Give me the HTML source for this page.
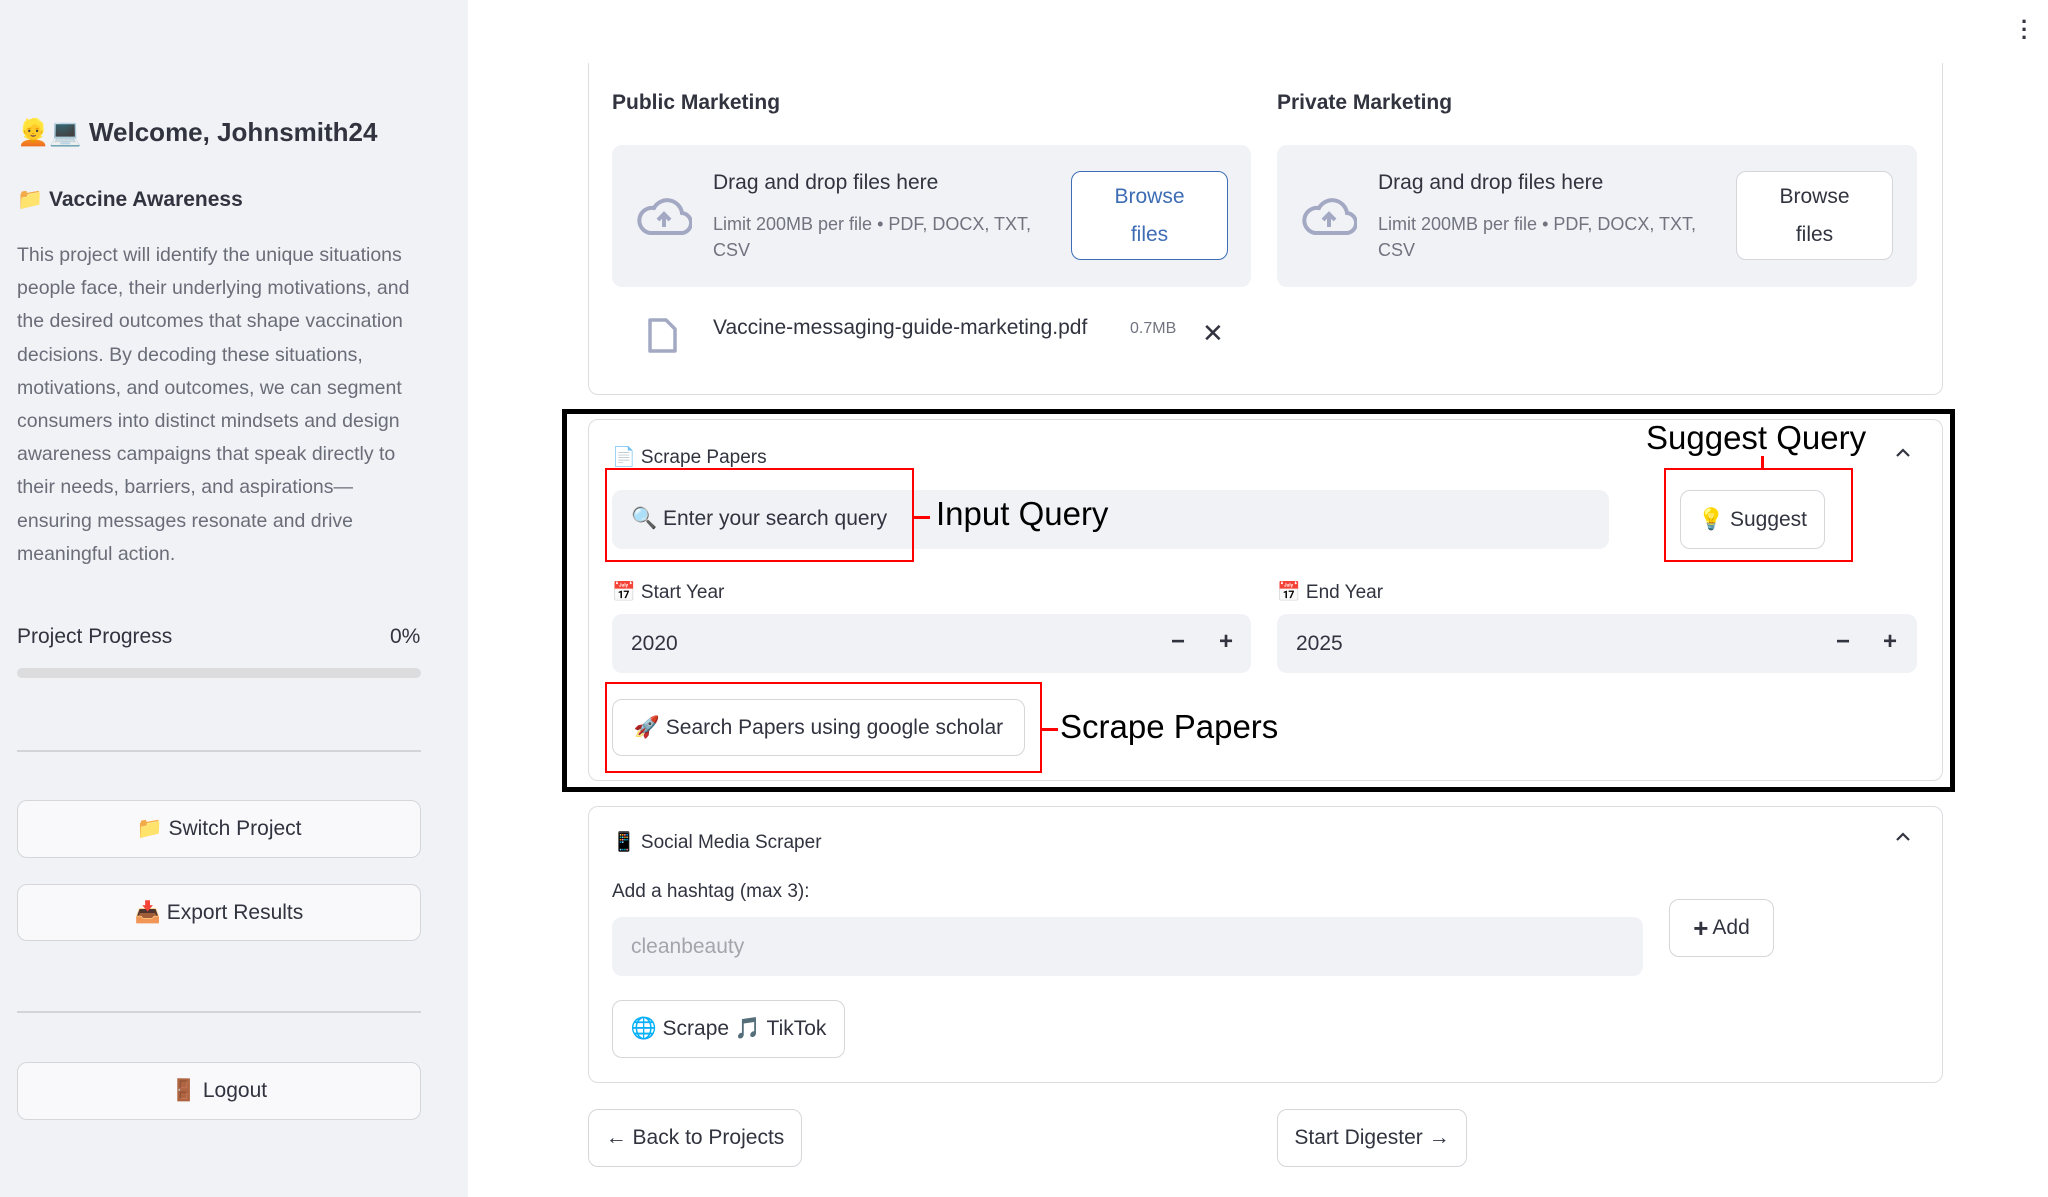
<!DOCTYPE html>
<html><head><meta charset="utf-8"><style>
*{box-sizing:border-box;margin:0;padding:0}
body{width:2048px;height:1197px;position:relative;overflow:hidden;background:#fff;font-family:"Liberation Sans","Noto Sans CJK JP",sans-serif;color:#31333f}
.a{position:absolute;white-space:nowrap}
.sb{position:absolute;left:0;top:0;width:468px;height:1197px;background:#f0f2f6}
.btn{position:absolute;border:1px solid #d5d6da;border-radius:10px;background:#fff;display:flex;align-items:center;justify-content:center;font-size:21px;color:#31333f}
.sbtn{background:#f9f9fb}
.inp{position:absolute;background:#f0f2f6;border-radius:10px}
.card{position:absolute;border:1.5px solid #dcdde1;border-radius:10px}
.red{position:absolute;border:2.5px solid #f00}
.ann{position:absolute;font-family:"Liberation Sans",sans-serif;font-size:33px;color:#000;white-space:nowrap}
.lbl{font-size:19px}
.p{font-size:19.5px;color:#6a6d78;line-height:33.2px}
</style></head><body>
<div class="sb"></div>
<div class="a" style="left:17px;top:117px;font-size:26px;font-weight:bold">👱💻 Welcome, Johnsmith24</div>
<div class="a" style="left:17px;top:188px;font-size:21px;font-weight:bold">📁 Vaccine Awareness</div>
<div class="a p" style="left:17px;top:239px">This project will identify the unique situations<br>people face, their underlying motivations, and<br>the desired outcomes that shape vaccination<br>decisions. By decoding these situations,<br>motivations, and outcomes, we can segment<br>consumers into distinct mindsets and design<br>awareness campaigns that speak directly to<br>their needs, barriers, and aspirations—<br>ensuring messages resonate and drive<br>meaningful action.</div>
<div class="a" style="left:17px;top:625px;font-size:21px">Project Progress</div>
<div class="a" style="left:390px;top:625px;font-size:21px">0%</div>
<div class="a" style="left:17px;top:668px;width:404px;height:10px;border-radius:5px;background:#dcdcde"></div>
<div class="a" style="left:17px;top:750px;width:404px;height:2px;background:#d3d4d8"></div>
<div class="a" style="left:17px;top:1011px;width:404px;height:2px;background:#d3d4d8"></div>
<div class="btn sbtn" style="left:17px;top:800px;width:404px;height:58px">📁 Switch Project</div>
<div class="btn sbtn" style="left:17px;top:884px;width:404px;height:57px">📥 Export Results</div>
<div class="btn sbtn" style="left:17px;top:1062px;width:404px;height:58px">🚪 Logout</div>
<div class="a" style="left:2021px;top:18px;font-size:22px;font-weight:bold;line-height:8px">·<br>·<br>·</div>

<!-- top card -->
<div class="card" style="left:588px;top:63px;width:1355px;height:332px;border-top:none;border-radius:0 0 10px 10px"></div>
<div class="a" style="left:612px;top:91px;font-size:21px;font-weight:bold">Public Marketing</div>
<div class="a" style="left:1277px;top:91px;font-size:21px;font-weight:bold">Private Marketing</div>
<div class="inp" style="left:612px;top:145px;width:639px;height:142px"></div>
<div class="inp" style="left:1277px;top:145px;width:640px;height:142px"></div>
<svg class="a" style="left:636px;top:198px" width="56" height="38" viewBox="0 0 56 38"><path d="M14 35 H44 A10 10 0 0 0 46 15 A15 15 0 0 0 18 10 A12 12 0 0 0 14 35 Z" fill="none" stroke="#a3a8c3" stroke-width="4"/><path d="M28 29 V17 M22 22 L28 16 L34 22" stroke="#a3a8c3" stroke-width="4" fill="none"/></svg>
<svg class="a" style="left:1301px;top:198px" width="56" height="38" viewBox="0 0 56 38"><path d="M14 35 H44 A10 10 0 0 0 46 15 A15 15 0 0 0 18 10 A12 12 0 0 0 14 35 Z" fill="none" stroke="#a3a8c3" stroke-width="4"/><path d="M28 29 V17 M22 22 L28 16 L34 22" stroke="#a3a8c3" stroke-width="4" fill="none"/></svg>
<div class="a" style="left:713px;top:171px;font-size:21px">Drag and drop files here</div>
<div class="a" style="left:713px;top:211px;font-size:18px;color:#71747f;line-height:26px">Limit 200MB per file • PDF, DOCX, TXT,<br>CSV</div>
<div class="a" style="left:1378px;top:171px;font-size:21px">Drag and drop files here</div>
<div class="a" style="left:1378px;top:211px;font-size:18px;color:#71747f;line-height:26px">Limit 200MB per file • PDF, DOCX, TXT,<br>CSV</div>
<div class="btn" style="left:1071px;top:171px;width:157px;height:89px;border-color:#3e6db5;color:#3e6db5;line-height:38px;text-align:center">Browse<br>files</div>
<div class="btn" style="left:1736px;top:171px;width:157px;height:89px;line-height:38px;text-align:center">Browse<br>files</div>
<svg class="a" style="left:647px;top:317px" width="31" height="37" viewBox="0 0 31 37"><path d="M3 3 H19 L28 12 V34 H3 Z" fill="none" stroke="#a3a8c3" stroke-width="3.5" stroke-linejoin="round"/></svg>
<div class="a" style="left:713px;top:316px;font-size:21px">Vaccine-messaging-guide-marketing.pdf</div>
<div class="a" style="left:1130px;top:320px;font-size:16px;color:#71747f">0.7MB</div>
<div class="a" style="left:1202px;top:318px;font-size:26px">✕</div>

<!-- scrape card -->
<div class="a" style="left:562px;top:409px;width:1393px;height:383px;border:5px solid #000"></div>
<div class="card" style="left:588px;top:419px;width:1355px;height:362px"></div>
<div class="a lbl" style="left:612px;top:445px">📄 Scrape Papers</div>
<svg class="a" style="left:1895px;top:447px" width="16" height="11" viewBox="0 0 16 11"><path d="M2 9 L8 3 L14 9" fill="none" stroke="#31333f" stroke-width="2.2"/></svg>
<div class="inp" style="left:612px;top:490px;width:997px;height:59px"></div>
<div class="a" style="left:631px;top:507px;font-size:21px">🔍 Enter your search query</div>
<div class="red" style="left:605px;top:468px;width:309px;height:94px"></div>
<div class="a" style="left:914px;top:516px;width:16px;height:2.5px;background:#f00"></div>
<div class="ann" style="left:936px;top:495px">Input Query</div>
<div class="ann" style="left:1646px;top:419px">Suggest Query</div>
<div class="a" style="left:1761px;top:456px;width:2.5px;height:13px;background:#f00"></div>
<div class="red" style="left:1664px;top:468px;width:189px;height:94px"></div>
<div class="btn" style="left:1680px;top:490px;width:145px;height:59px">💡 Suggest</div>
<div class="a lbl" style="left:612px;top:580px">📅 Start Year</div>
<div class="a lbl" style="left:1277px;top:580px">📅 End Year</div>
<div class="inp" style="left:612px;top:614px;width:639px;height:59px"></div>
<div class="inp" style="left:1277px;top:614px;width:640px;height:59px"></div>
<div class="a" style="left:631px;top:632px;font-size:21px">2020</div>
<div class="a" style="left:1296px;top:632px;font-size:21px">2025</div>
<div class="a" style="left:1171px;top:628px;font-size:24px;font-weight:bold">−</div>
<div class="a" style="left:1219px;top:628px;font-size:24px;font-weight:bold">+</div>
<div class="a" style="left:1836px;top:628px;font-size:24px;font-weight:bold">−</div>
<div class="a" style="left:1883px;top:628px;font-size:24px;font-weight:bold">+</div>
<div class="red" style="left:605px;top:682px;width:437px;height:91px"></div>
<div class="btn" style="left:612px;top:699px;width:413px;height:57px">🚀 Search Papers using google scholar</div>
<div class="a" style="left:1042px;top:728px;width:16px;height:2.5px;background:#f00"></div>
<div class="ann" style="left:1060px;top:708px">Scrape Papers</div>

<!-- social -->
<div class="card" style="left:588px;top:806px;width:1355px;height:277px"></div>
<div class="a lbl" style="left:612px;top:830px">📱 Social Media Scraper</div>
<svg class="a" style="left:1895px;top:831px" width="16" height="11" viewBox="0 0 16 11"><path d="M2 9 L8 3 L14 9" fill="none" stroke="#31333f" stroke-width="2.2"/></svg>
<div class="a lbl" style="left:612px;top:881px">Add a hashtag (max 3):</div>
<div class="inp" style="left:612px;top:917px;width:1031px;height:59px"></div>
<div class="a" style="left:631px;top:935px;font-size:21px;color:#a3a5ad">cleanbeauty</div>
<div class="btn" style="left:1669px;top:899px;width:105px;height:58px"><b style="font-size:26px;margin-right:4px">+</b>Add</div>
<div class="btn" style="left:612px;top:1000px;width:233px;height:58px">🌐 Scrape 🎵 TikTok</div>
<div class="btn" style="left:588px;top:1109px;width:214px;height:58px">← Back to Projects</div>
<div class="btn" style="left:1277px;top:1109px;width:190px;height:58px">Start Digester →</div>
</body></html>
